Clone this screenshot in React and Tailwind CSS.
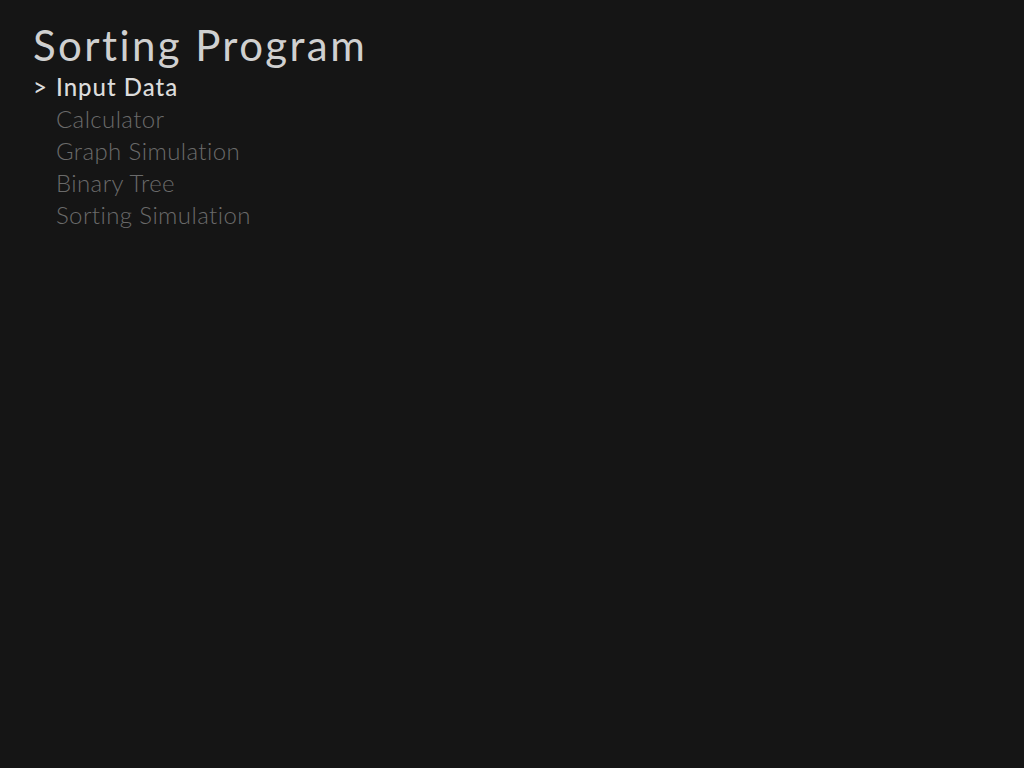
const ITEMS = ['Calculator', 'Graph Simulation', 'Binary Tree', 'Sorting Simulation'];

export default function App() {
  return (
    <div className="min-h-[768px] w-full bg-[#151515] px-[33px] pt-[20px] [font-variant-ligatures:none]" style={{ fontFamily: 'Lato, "Open Sans", sans-serif' }}>
      <h1 className="text-[42px] leading-[51px] font-normal text-[#d0d0d0] tracking-[2.4px]">Sorting Program</h1>
      <ul>
        <li className="flex h-[32px] items-center text-[24px] text-[#dcdcdc] font-medium tracking-[1px]">
          <span className="w-[23px]">&gt;</span>
          <span>Input Data</span>
        </li>
        {ITEMS.map(item => (
          <li key={item} className="flex h-[32px] items-center pl-[23px] text-[24px] font-light tracking-[0.4px] text-[#6a6a6a]">
            {item}
          </li>
        ))}
      </ul>
    </div>
  );
}
